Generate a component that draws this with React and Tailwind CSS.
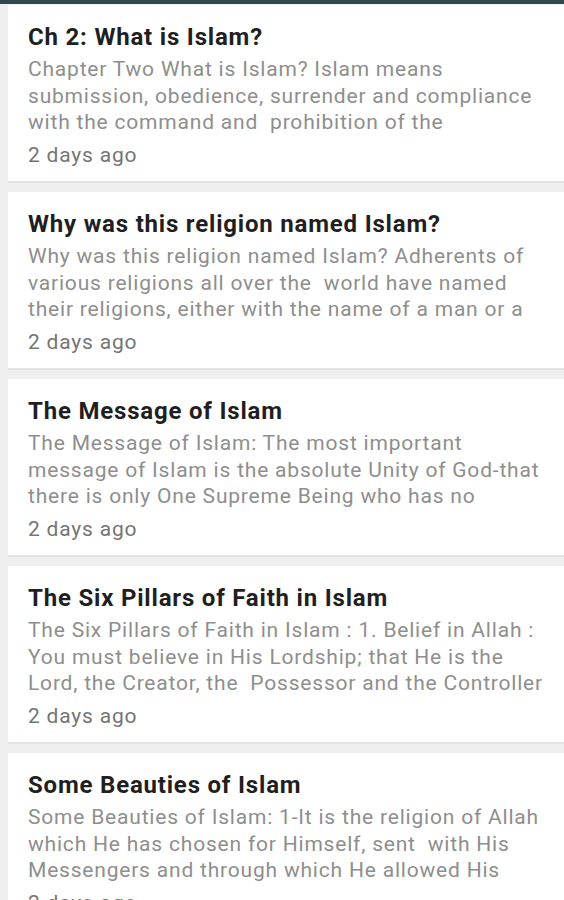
import React from "react";

const items = [
  {
    title: "Ch 2: What is Islam?",
    lines: [
      "Chapter Two What is Islam? Islam means",
      "submission, obedience, surrender and compliance",
      "with the command and  prohibition of the",
    ],
  },
  {
    title: "Why was this religion named Islam?",
    lines: [
      "Why was this religion named Islam? Adherents of",
      "various religions all over the  world have named",
      "their religions, either with the name of a man or a",
    ],
  },
  {
    title: "The Message of Islam",
    lines: [
      "The Message of Islam: The most important",
      "message of Islam is the absolute Unity of God-that",
      "there is only One Supreme Being who has no",
    ],
  },
  {
    title: "The Six Pillars of Faith in Islam",
    lines: [
      "The Six Pillars of Faith in Islam : 1. Belief in Allah :",
      "You must believe in His Lordship; that He is the",
      "Lord, the Creator, the  Possessor and the Controller",
    ],
  },
  {
    title: "Some Beauties of Islam",
    lines: [
      "Some Beauties of Islam: 1-It is the religion of Allah",
      "which He has chosen for Himself, sent  with His",
      "Messengers and through which He allowed His",
    ],
  },
];

export default function App() {
  return (
    <div
      className="w-[564px] h-[900px] overflow-hidden bg-[#efefef]"
      style={{ fontFamily: "Roboto, 'Noto Sans', sans-serif" }}
    >
      <div className="h-[4px] bg-[#2e4852]" />
      <div className="flex flex-col gap-[9px] pt-[1px] pl-2">
        {items.map((it, i) => (
          <div
            key={i}
            className="bg-white border-b-2 border-[#e3e3e3] pt-[17px] pb-[13.5px] px-5"
          >
            <div className="text-[24px] leading-[30px] tracking-[0.8px] font-bold text-[#1f1f1f] whitespace-nowrap">
              {it.title}
            </div>
            <div className="mt-[4px] text-[21px] leading-[26.5px] tracking-[0.8px] text-[#8e8e8e]">
              {it.lines.map((l, j) => (
                <div key={j} className="whitespace-pre">
                  {l}
                </div>
              ))}
            </div>
            <div className="mt-[6px] text-[21px] leading-[26px] tracking-[0.8px] text-[#757575]">
              2 days ago
            </div>
          </div>
        ))}
      </div>
    </div>
  );
}
